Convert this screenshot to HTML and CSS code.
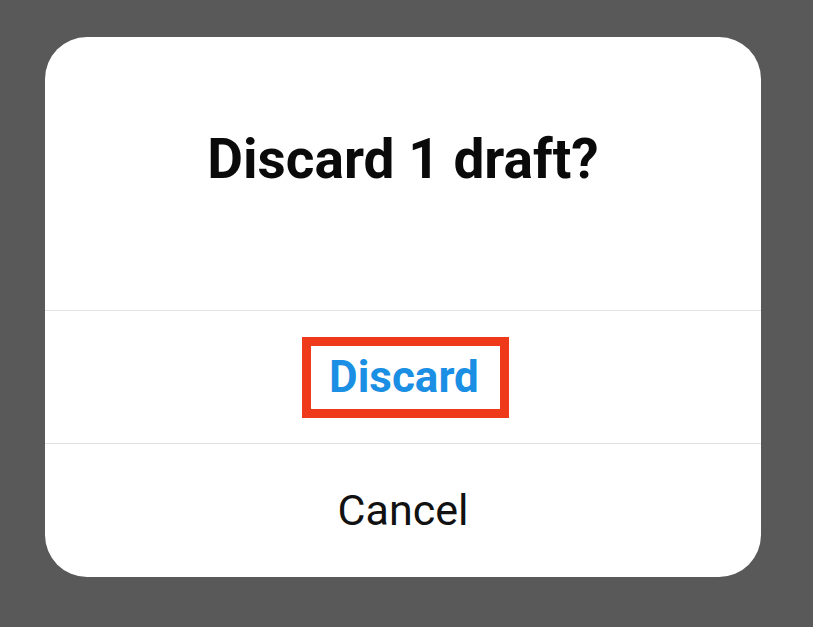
FILE: index.html
```html
<!DOCTYPE html>
<html>
<head>
<meta charset="utf-8">
<link rel="stylesheet" href="styles.css">
</head>
<body>
<div class="dialog">
  <div class="head">
    <h1 class="title">Discard 1 draft?</h1>
  </div>
  <div class="row">
    <span class="highlight"><span class="discard">Discard</span></span>
  </div>
  <div class="row">
    <span class="cancel">Cancel</span>
  </div>
</div>
</body>
</html>
```
FILE: styles.css
```css
html, body {
  margin: 0;
  padding: 0;
}
body {
  background: #595959;
  width: 813px;
  height: 627px;
  overflow: hidden;
  font-family: Roboto, "Liberation Sans", sans-serif;
}
.dialog {
  margin: 37px 0 0 45px;
  width: 716px;
  height: 540px;
  background: #fff;
  border-radius: 42px;
  display: flex;
  flex-direction: column;
  overflow: hidden;
}
.head {
  height: 274px;
  border-bottom: 1px solid #e2e2e2;
  display: flex;
  justify-content: center;
  box-sizing: border-box;
  padding-top: 89px;
}
.title {
  margin: 0;
  font-size: 55px;
  line-height: 66px;
  font-weight: 700;
  color: #0a0a0a;
}
.row {
  height: 132px;
  display: flex;
  align-items: center;
  justify-content: center;
}
.row + .row {
  border-top: 1px solid #e2e2e2;
}
.highlight {
  box-sizing: border-box;
  width: 207px;
  height: 81px;
  margin-left: 4px;
  padding-right: 2px;
  border: 9px solid #ee3a1a;
  display: flex;
  align-items: center;
  justify-content: center;
}
.discard {
  font-size: 44px;
  font-weight: 700;
  color: #1b8fe3;
  line-height: 1;
}
.cancel {
  font-size: 43px;
  font-weight: 400;
  color: #111;
  line-height: 1;
}
```
